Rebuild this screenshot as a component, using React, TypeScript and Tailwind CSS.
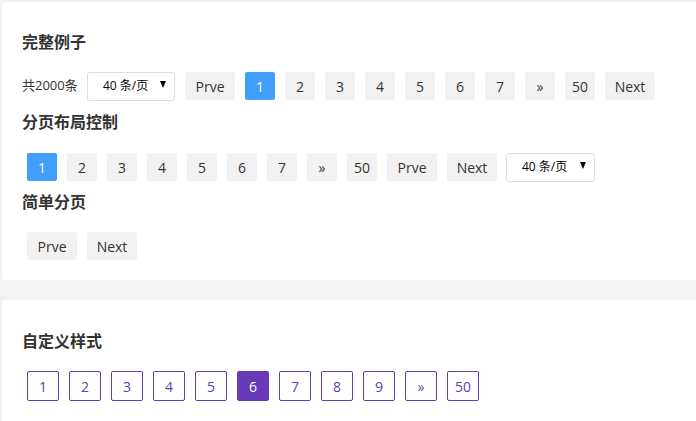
const pages = ["1", "2", "3", "4", "5", "6", "7", "»", "50"];
const custom = ["1", "2", "3", "4", "5", "6", "7", "8", "9", "»", "50"];

const font = { fontFamily: '"Open Sans", "Noto Sans CJK SC", sans-serif' };

const Btn = ({ label, active, wide }: { label: string; active?: boolean; wide?: boolean }) => (
  <span
    className={`flex h-[28px] items-center justify-center rounded-[2px] text-[14px] ${
      wide ? "w-[50px]" : "w-[30px]"
    } ${active ? "bg-[#409eff] text-white" : "bg-[#f2f2f2] text-[#333]"}`}
  >
    {label}
  </span>
);

const Select = ({ cls }: { cls: string }) => (
  <div
    className={`flex h-[29px] items-center justify-between rounded-[3px] border border-[#dcdde6] bg-white pl-[15px] pr-[8px] text-[12px] text-black ${cls}`}
  >
    <span>40 条/页</span>
    <span className="mb-[3px] h-0 w-0 border-x-[3px] border-t-[7px] border-x-transparent border-t-black" />
  </div>
);

const Title = ({ text, cls }: { text: string; cls: string }) => (
  <h2 className={`h-5 text-[16px] leading-5 font-bold text-[#333] ${cls}`}>{text}</h2>
);

export default function App() {
  return (
    <div style={font} className="h-[421px] w-[696px] overflow-hidden bg-[#f3f3f3] pl-[2px] pt-[2px]">
      <section className="w-[720px] rounded-[4px] bg-white pt-[30px] pb-5 pl-5">
        <Title text="完整例子" cls="" />
        <div className="mt-5 flex h-[28px] items-center">
          <span className="w-[65px] text-[13px] text-[#333]">共2000条</span>
          <Select cls="w-[88px]" />
          <div className="ml-[10px] flex gap-[10px]">
            <Btn label="Prve" wide />
            {pages.map((p, i) => (
              <Btn key={p} label={p} active={i === 0} />
            ))}
            <Btn label="Next" wide />
          </div>
        </div>

        <Title text="分页布局控制" cls="mt-3" />
        <div className="mt-[21px] ml-[5px] flex h-[28px] items-center">
          <div className="flex gap-[10px]">
            {pages.map((p, i) => (
              <Btn key={p} label={p} active={i === 0} />
            ))}
            <Btn label="Prve" wide />
            <Btn label="Next" wide />
          </div>
          <Select cls="ml-[9px] w-[89px]" />
        </div>

        <Title text="简单分页" cls="mt-[11px]" />
        <div className="mt-5 ml-[5px] flex h-[28px] gap-[10px]">
          <Btn label="Prve" wide />
          <Btn label="Next" wide />
        </div>
      </section>

      <section className="mt-5 h-[140px] w-[720px] rounded-[4px] bg-white pt-[31px] pl-5">
        <Title text="自定义样式" cls="" />
        <div className="mt-5 ml-[5px] flex gap-[10px]">
          {custom.map((p) => (
            <span
              key={p}
              className={`flex h-[30px] w-[32px] items-center justify-center rounded-[2px] border border-[#673ab7] text-[14px] ${
                p === "6" ? "bg-[#673ab7] text-white" : "bg-white text-[#673ab7]"
              }`}
            >
              {p}
            </span>
          ))}
        </div>
      </section>
    </div>
  );
}
